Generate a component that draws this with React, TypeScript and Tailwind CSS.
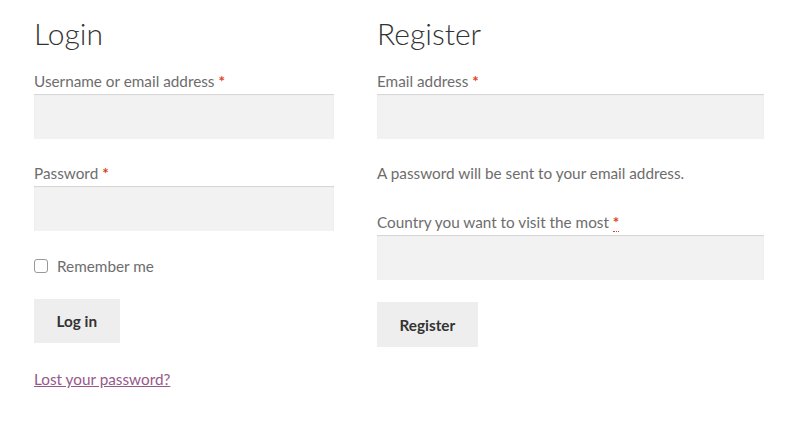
export default function App() {
  const font = { fontFamily: "Lato, 'Noto Sans', sans-serif" };
  const Req = ({ dotted }: { dotted?: boolean }) => (
    <span className={"text-[#e2401c] font-bold " + (dotted ? "border-b border-dotted border-[#e2401c] leading-none" : "")}>*</span>
  );
  const Input = () => (
    <div className="h-[45px] w-full bg-[#f2f2f2] shadow-[inset_0_1px_1px_rgba(0,0,0,0.125)]" />
  );
  return (
    <div className="w-[797px] h-[424px] bg-white text-[#6d6d6d] text-[15.3px]" style={font}>
      <div className="flex gap-[43px] pl-[34px] pt-[13px]">
        <div className="w-[300px] flex flex-col">
          <h2 className="text-[30px] leading-[40px] font-light text-[#333333]">Login</h2>
          <label className="mt-[18px] leading-[20px]">Username or email address <Req /></label>
          <div className="mt-[3px]"><Input /></div>
          <label className="mt-[24px] leading-[20px]">Password <Req /></label>
          <div className="mt-[3px]"><Input /></div>
          <label className="mt-[25px] leading-[20px] flex items-center gap-[9px]">
            <span className="w-[14px] h-[14px] rounded-[3px] border border-[#999] bg-white" />
            Remember me
          </label>
          <div className="mt-[23px]">
            <button className="h-[44px] px-[22.5px] bg-[#eeeeee] text-[#333333] font-bold leading-[20px]">Log in</button>
          </div>
          <a className="mt-[26px] leading-[20px] text-[#96588a] underline">Lost your password?</a>
        </div>
        <div className="w-[387px] flex flex-col">
          <h2 className="text-[30px] leading-[40px] font-light text-[#333333]">Register</h2>
          <label className="mt-[18px] leading-[20px]">Email address <Req /></label>
          <div className="mt-[3px]"><Input /></div>
          <p className="mt-[24px] leading-[20px]">A password will be sent to your email address.</p>
          <label className="mt-[29px] leading-[20px]">Country you want to visit the most <Req dotted /></label>
          <div className="mt-[3px]"><Input /></div>
          <div className="mt-[22px]">
            <button className="h-[45px] px-[22.5px] bg-[#eeeeee] text-[#333333] font-bold leading-[20px]">Register</button>
          </div>
        </div>
      </div>
    </div>
  );
}
